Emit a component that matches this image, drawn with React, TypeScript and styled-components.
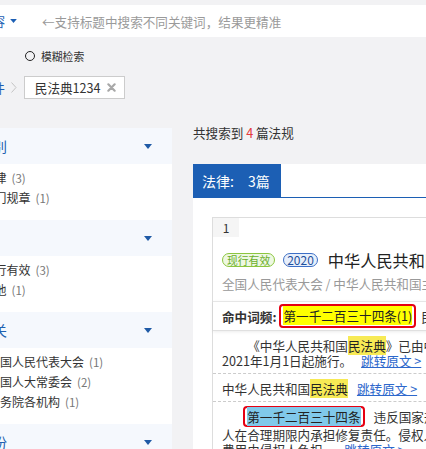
import React from 'react';
import styled, { createGlobalStyle } from 'styled-components';

const GlobalStyle = createGlobalStyle`
  html, body { margin: 0; padding: 0; }
  body {
    background: #f2f2f4;
    font-family: "Noto Sans CJK SC", "Noto Sans", sans-serif;
    color: #333;
  }
`;

const BLUE = '#1c5fb4';

const Page = styled.div`
  width: 426px;
  height: 449px;
  overflow: hidden;
  background: #f2f2f4;
`;

const TopBar = styled.div`
  margin-top: 5px;
  height: 32px;
  background: #fff;
  display: flex;
  align-items: center;
`;

const Scope = styled.div`
  flex: none;
  margin-left: -45.4px;
  display: flex;
  align-items: center;
  gap: 5px;
  color: ${BLUE};
  font-size: 12.6px;
  line-height: 16px;
`;

const SearchInput = styled.input`
  flex: 1;
  margin-left: 25px;
  border: none;
  outline: none;
  padding: 0;
  background: transparent;
  font-family: inherit;
  font-size: 12.6px;
  color: #333;
  &::placeholder { color: #9a9a9a; }
`;

const OptionRow = styled.label`
  margin: 12px 0 0 25px;
  height: 14px;
  display: flex;
  align-items: center;
  gap: 6px;
  font-size: 10.8px;
  color: #333;
`;

const Radio = styled.span`
  width: 8px;
  height: 8px;
  border: 1.3px solid #222;
  border-radius: 50%;
`;

const Crumbs = styled.div`
  margin-top: 13px;
  height: 23px;
  display: flex;
  align-items: center;
`;

const CrumbLink = styled.span`
  margin-left: -45.6px;
  color: ${BLUE};
  font-size: 12.6px;
`;

const Chevron = styled.svg`
  margin: 0 7px 0 6px;
`;

const FilterTag = styled.span`
  height: 21px;
  display: flex;
  align-items: center;
  gap: 6px;
  padding: 0 8px 0 10px;
  border: 1px solid #ccc;
  background: #fff;
  font-size: 12.6px;
  color: #333;
`;

const Body = styled.div`
  margin-top: 24px;
  display: flex;
  align-items: flex-start;
`;

const Sidebar = styled.aside`
  flex: none;
  width: 232px;
  margin: 5px 0 0 -60px;
  background: #fff;
`;

const GroupHead = styled.div`
  height: 36px;
  display: flex;
  align-items: center;
  justify-content: space-between;
  padding: 0 20px 0 11px;
  background: #f5f8fd;
  color: #2160b0;
  font-size: 14px;
`;

const GroupList = styled.ul<{ $indent: number }>`
  list-style: none;
  margin: 0;
  padding: 4px 0 12px ${p => p.$indent}px;
`;

const GroupItem = styled.li`
  height: 20px;
  line-height: 20px;
  font-size: 12px;
  color: #333;
  white-space: nowrap;
`;

const Count = styled.span`
  margin-left: 5px;
  font-size: 11.5px;
  color: #777;
`;

const Main = styled.main`
  flex: none;
  width: 860px;
  margin-left: 21px;
`;

const Summary = styled.div`
  height: 20px;
  line-height: 20px;
  font-size: 12.6px;
  color: #333;
  b { font-weight: normal; color: #e4393c; }
`;

const TabBar = styled.div`
  margin-top: 21px;
  display: flex;
  background: #fff;
  border-bottom: 1.5px solid ${BLUE};
`;

const Tab = styled.div`
  width: 79px;
  height: 33px;
  padding-left: 9px;
  display: flex;
  align-items: center;
  background: ${BLUE};
  color: #fff;
  font-size: 14px;
  span { margin-left: 14px; }
`;

const Results = styled.section`
  background: #fff;
  padding: 19px 0 0 19px;
  height: 260px;
`;

const Card = styled.article`
  width: 820px;
  border: 1px solid #ddd;
  background: #fff;
`;

const Index = styled.div`
  width: 26px;
  height: 19px;
  line-height: 19px;
  text-align: center;
  background: #f5f5f5;
  font-size: 12px;
  color: #333;
`;

const CardHead = styled.div`
  padding: 0 9px 8px;
`;

const TitleRow = styled.div`
  margin-top: 12px;
  height: 22px;
  display: flex;
  align-items: center;
  gap: 8px;
  white-space: nowrap;
`;

const Pill = styled.span<{ $tone: 'green' | 'blue' }>`
  height: 12px;
  line-height: 12px;
  padding: 0 ${p => (p.$tone === 'green' ? 4 : 3)}px;
  border-radius: 8px;
  font-size: ${p => (p.$tone === 'green' ? 10.8 : 12)}px;
  border: 1px solid ${p => (p.$tone === 'green' ? '#8cc63f' : '#3d6fc6')};
  background: ${p => (p.$tone === 'green' ? '#eef8e2' : '#e7effb')};
  color: ${p => (p.$tone === 'green' ? '#6aae2c' : '#1f4f9c')};
`;

const Title = styled.h2`
  margin: 0 0 0 2px;
  font-size: 16.2px;
  font-weight: normal;
  color: #222;
`;

const Meta = styled.div`
  margin-top: 4px;
  line-height: 18px;
  font-size: 12.6px;
  color: #999;
  white-space: nowrap;
`;

const HitRow = styled.div`
  height: 28px;
  display: flex;
  align-items: center;
  padding: 0 9px;
  border-top: 1px solid #e6e6e6;
  border-bottom: 1px solid #e0e0e0;
  box-shadow: 0 1px 3px rgba(0, 0, 0, 0.08);
  font-size: 12.6px;
  white-space: nowrap;
  strong { color: #333; }
`;

const HitBox = styled.span<{ $bg: string; $left?: number; $right?: number; $line?: number }>`
  display: inline-block;
  margin: 0 ${p => p.$right ?? 0}px 0 ${p => p.$left ?? 0}px;
  padding: 1px 2px;
  border: 2px solid #e60012;
  border-radius: 4px;
  line-height: ${p => p.$line ?? 18}px;
  text-indent: 0;
  mark { background: ${p => p.$bg}; color: #222; }
`;

const After = styled.span`
  margin-left: 5px;
  color: #333;
`;

const Passage = styled.p<{ $first?: boolean; $top?: number }>`
  margin: 0;
  padding: ${p => p.$top ?? 7}px 9px 5px;
  border-top: ${p => (p.$first ? 'none' : '1px dashed #ccc')};
  font-size: 12.6px;
  line-height: 15px;
  color: #333;
  white-space: nowrap;
`;

const Indented = styled.span`
  padding-left: 2em;
`;

const Mark = styled.mark`
  background: #f7ea55;
  color: #222;
`;

const Jump = styled.a`
  margin-left: 9px;
  color: #2d68cc;
  text-decoration: underline;
`;

const Caret = ({ color, w = 7 }: { color: string; w?: number }) => (
  <svg width={w} height={Math.round(w * 0.6)} viewBox="0 0 10 6">
    <path d="M0 0 L10 0 L5 6 Z" fill={color} />
  </svg>
);

const groups = [
  { title: '效力级别', indent: 42.5, items: [['法律', 3], ['部门规章', 1]] },
  { title: '时效性', indent: 42.5, items: [['现行有效', 3], ['其他', 1]] },
  { title: '发布机关', indent: 48, items: [['全国人民代表大会', 1], ['全国人大常委会', 2], ['国务院各机构', 1]] },
  { title: '发布年份', indent: 42.5, items: [['2020', 3], ['2021', 1]] },
] as const;

export default function App() {
  return (
    <Page>
      <GlobalStyle />
      <TopBar>
        <Scope>全文内容<Caret color={BLUE} /></Scope>
        <SearchInput placeholder="←支持标题中搜索不同关键词，结果更精准" />
      </TopBar>
      <OptionRow><Radio />模糊检索</OptionRow>
      <Crumbs>
        <CrumbLink>检索条件</CrumbLink>
        <Chevron width="6" height="11" viewBox="0 0 6 11">
          <path d="M0.5 0.5 L5 5.5 L0.5 10.5" fill="none" stroke="#c4c4c4" strokeWidth="1" />
        </Chevron>
        <FilterTag>
          民法典1234
          <svg width="9" height="9" viewBox="0 0 10 10">
            <path d="M1.5 1.5 L8.5 8.5 M8.5 1.5 L1.5 8.5" stroke="#a8a8a8" strokeWidth="2.4" strokeLinecap="round" />
          </svg>
        </FilterTag>
      </Crumbs>
      <Body>
        <Sidebar>
          {groups.map(g => (
            <div key={g.title}>
              <GroupHead>
                {g.title}
                <Caret color="#1f5aa6" w={8} />
              </GroupHead>
              <GroupList $indent={g.indent}>
                {g.items.map(([name, n]) => (
                  <GroupItem key={name}>{name}<Count>({n})</Count></GroupItem>
                ))}
              </GroupList>
            </div>
          ))}
        </Sidebar>
        <Main>
          <Summary>共搜索到 <b>4</b> 篇法规</Summary>
          <TabBar>
            <Tab>法律:<span>3篇</span></Tab>
          </TabBar>
          <Results>
            <Card>
              <Index>1</Index>
              <CardHead>
                <TitleRow>
                  <Pill $tone="green">现行有效</Pill>
                  <Pill $tone="blue">2020</Pill>
                  <Title>中华人民共和国民法典</Title>
                </TitleRow>
                <Meta>全国人民代表大会 / 中华人民共和国主席令第四十五号 / 2020-05-28</Meta>
              </CardHead>
              <HitRow>
                <strong>命中词频:</strong>
                <HitBox $bg="#ffff00" $left={3}><mark>第一千二百三十四条(1)</mark></HitBox>
                <After>民法典(2)</After>
              </HitRow>
              <Passage $first>
                <Indented>《中华人民共和国<Mark>民法典</Mark>》已由中华人民共和国第十三届全国人民代表大会第三次会议于2020年5月28日通过，现予公布，自</Indented>
                <br />
                2021年1月1日起施行。<Jump>跳转原文 &gt;</Jump>
              </Passage>
              <Passage>
                中华人民共和国<Mark>民法典</Mark><Jump>跳转原文 &gt;</Jump>
              </Passage>
              <Passage $top={4}>
                <Indented>
                  <HitBox $bg="#80c9ea" $left={-4} $right={9} $line={15}><mark>第一千二百三十四条</mark></HitBox>
                  违反国家规定造成生态环境损害，生态环境能够修复的，国家规定的机关或者法律规定的组织有权请求侵权
                </Indented>
                <br />
                人在合理期限内承担修复责任。侵权人在期限内未修复的，国家规定的机关或者法律规定的组织可以自行或者委托他人进行修复，所需
                <br />
                费用由侵权人负担。<Jump>跳转原文 &gt;</Jump>
              </Passage>
            </Card>
          </Results>
        </Main>
      </Body>
    </Page>
  );
}
